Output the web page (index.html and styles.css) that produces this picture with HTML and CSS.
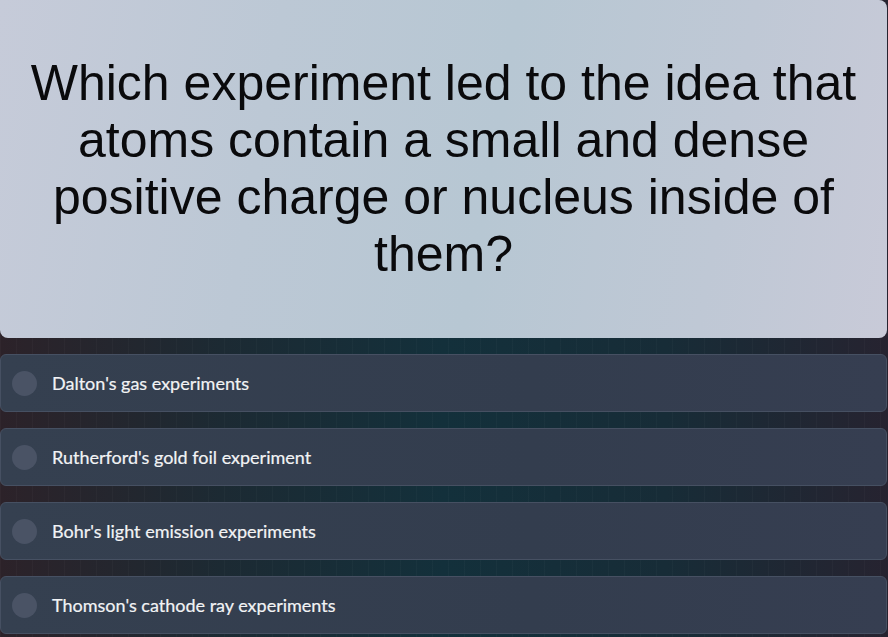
FILE: index.html
```html
<!DOCTYPE html>
<html lang="en">
<head>
    <meta charset="UTF-8">
    <meta name="viewport" content="width=device-width, initial-scale=1.0">
    <title>Quiz</title>
    <link rel="stylesheet" href="styles.css">
</head>
<body>
    <div class="quiz">
        <div class="question-card">
            <h1 class="question">Which experiment led to the idea that atoms contain a small and dense positive charge or nucleus inside of them?</h1>
        </div>

        <ul class="options">
            <li class="option"><span class="radio"></span><span class="label">Dalton's gas experiments</span></li>
            <li class="option"><span class="radio"></span><span class="label">Rutherford's gold foil experiment</span></li>
            <li class="option"><span class="radio"></span><span class="label">Bohr's light emission experiments</span></li>
            <li class="option"><span class="radio"></span><span class="label">Thomson's cathode ray experiments</span></li>
        </ul>
    </div>
</body>
</html>
```

FILE: styles.css
```css
body {
    margin: 0;
    height: 100vh;
    overflow: hidden;
    font-family: Lato, "Open Sans", sans-serif;
    background-color: #182a34;
    background-image:
        repeating-linear-gradient(90deg, rgba(255, 255, 255, 0.025) 0 1px, transparent 1px 16px),
        linear-gradient(90deg, #2c2229 0%, #1c2a33 25%, #13303b 50%, #172c37 75%, #262330 100%);
}

.quiz {
    width: 887px;
}

.question-card {
    height: 338px;
    box-sizing: border-box;
    display: flex;
    align-items: center;
    justify-content: center;
    padding: 0 12px;
    border-radius: 0 8px 8px 8px;
    background: linear-gradient(100deg, #c6cbd9 0%, #bcc8d5 30%, #b7c7d3 55%, #bfc8d5 80%, #c8cad8 100%);
}

.question {
    margin: 0;
    font-family: "Liberation Sans", Arial, sans-serif;
    font-weight: normal;
    font-size: 50px;
    line-height: 57px;
    text-align: center;
    color: #0a0a0c;
}

.options {
    list-style: none;
    margin: 0;
    padding: 16px 0 0;
    display: flex;
    flex-direction: column;
    gap: 16px;
}

.option {
    height: 58px;
    box-sizing: border-box;
    display: flex;
    align-items: center;
    gap: 15px;
    padding-left: 11px;
    border: 1px solid #465062;
    border-radius: 6px;
    background: linear-gradient(90deg, #354050 0%, #333d4e 60%, #363e51 100%);
}

.radio {
    width: 25px;
    height: 25px;
    border-radius: 50%;
    background-color: #4a5365;
}

.label {
    font-size: 18px;
    color: #f2f3f5;
    -webkit-text-stroke: 0.2px #f2f3f5;
}
```
